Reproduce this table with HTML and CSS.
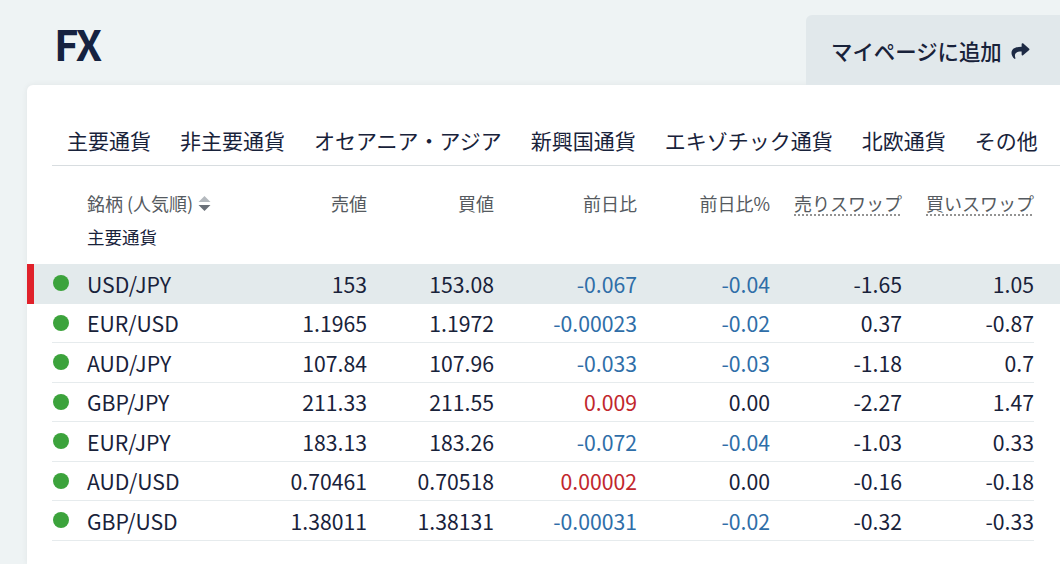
FILE: index.html
```html
<!DOCTYPE html>
<html lang="ja">
<head>
<meta charset="utf-8">
<title>FX</title>
<link rel="stylesheet" href="styles.css">
</head>
<body>
<div class="page">
  <header class="top">
    <h1 class="title">FX</h1>
    <button class="add-btn">マイページに追加
      <svg class="share" viewBox="0 0 512 512" width="21" height="18"><path fill="currentColor" d="M503.691 189.836L327.687 37.851C312.281 24.546 288 35.347 288 56.015v80.053C127.371 137.907 0 170.1 0 322.326c0 61.441 39.581 122.309 83.333 154.132 13.653 9.931 33.111-2.533 28.077-18.631C66.066 312.814 132.917 274.316 288 272.085V360c0 20.7 24.3 31.453 39.687 18.164l176.004-152c11.071-9.562 11.086-26.753 0-36.328z"/></svg>
    </button>
  </header>
  <main class="card">
    <nav class="tabs">
      <span class="tab">主要通貨</span>
      <span class="tab">非主要通貨</span>
      <span class="tab">オセアニア・アジア</span>
      <span class="tab">新興国通貨</span>
      <span class="tab">エキゾチック通貨</span>
      <span class="tab">北欧通貨</span>
      <span class="tab">その他</span>
    </nav>
    <div class="table">
      <div class="row head">
        <div class="inner">
          <span class="c-dot"></span>
          <span class="c-name">
            <span class="sort">銘柄 (人気順)
              <svg class="sort-ico" viewBox="0 0 12 18" width="13" height="18"><path d="M6 2 L12 8 H0 Z" fill="#b4b9be"/><path d="M6 17 L12 11 H0 Z" fill="#6a7078"/></svg>
            </span>
            <span class="group">主要通貨</span>
          </span>
          <span class="num">売値</span>
          <span class="num">買値</span>
          <span class="num">前日比</span>
          <span class="num">前日比%</span>
          <span class="num"><abbr class="dotted">売りスワップ</abbr></span>
          <span class="num"><abbr class="dotted">買いスワップ</abbr></span>
        </div>
      </div>

      <div class="row active">
        <div class="inner">
          <span class="c-dot"><i class="dot"></i></span>
          <span class="c-name">USD/JPY</span>
          <span class="num">153</span>
          <span class="num">153.08</span>
          <span class="num down">-0.067</span>
          <span class="num down">-0.04</span>
          <span class="num">-1.65</span>
          <span class="num">1.05</span>
        </div>
      </div>
      <div class="row">
        <div class="inner">
          <span class="c-dot"><i class="dot"></i></span>
          <span class="c-name">EUR/USD</span>
          <span class="num">1.1965</span>
          <span class="num">1.1972</span>
          <span class="num down">-0.00023</span>
          <span class="num down">-0.02</span>
          <span class="num">0.37</span>
          <span class="num">-0.87</span>
        </div>
      </div>
      <div class="row">
        <div class="inner">
          <span class="c-dot"><i class="dot"></i></span>
          <span class="c-name">AUD/JPY</span>
          <span class="num">107.84</span>
          <span class="num">107.96</span>
          <span class="num down">-0.033</span>
          <span class="num down">-0.03</span>
          <span class="num">-1.18</span>
          <span class="num">0.7</span>
        </div>
      </div>
      <div class="row">
        <div class="inner">
          <span class="c-dot"><i class="dot"></i></span>
          <span class="c-name">GBP/JPY</span>
          <span class="num">211.33</span>
          <span class="num">211.55</span>
          <span class="num up">0.009</span>
          <span class="num">0.00</span>
          <span class="num">-2.27</span>
          <span class="num">1.47</span>
        </div>
      </div>
      <div class="row">
        <div class="inner">
          <span class="c-dot"><i class="dot"></i></span>
          <span class="c-name">EUR/JPY</span>
          <span class="num">183.13</span>
          <span class="num">183.26</span>
          <span class="num down">-0.072</span>
          <span class="num down">-0.04</span>
          <span class="num">-1.03</span>
          <span class="num">0.33</span>
        </div>
      </div>
      <div class="row">
        <div class="inner">
          <span class="c-dot"><i class="dot"></i></span>
          <span class="c-name">AUD/USD</span>
          <span class="num">0.70461</span>
          <span class="num">0.70518</span>
          <span class="num up">0.00002</span>
          <span class="num">0.00</span>
          <span class="num">-0.16</span>
          <span class="num">-0.18</span>
        </div>
      </div>
      <div class="row">
        <div class="inner">
          <span class="c-dot"><i class="dot"></i></span>
          <span class="c-name">GBP/USD</span>
          <span class="num">1.38011</span>
          <span class="num">1.38131</span>
          <span class="num down">-0.00031</span>
          <span class="num down">-0.02</span>
          <span class="num">-0.32</span>
          <span class="num">-0.33</span>
        </div>
      </div>
    </div>
  </main>
</div>
</body>
</html>
```

FILE: styles.css
```css
* { box-sizing: border-box; }
html, body { margin: 0; padding: 0; }
body {
  background: #eef3f4;
  font-family: "Noto Sans CJK JP", "Noto Sans", sans-serif;
  color: #18223a;
  width: 1060px;
  height: 564px;
  overflow: hidden;
}
.page { padding-left: 27px; }
.top {
  display: flex;
  justify-content: space-between;
  align-items: flex-start;
  height: 85px;
}
.title {
  margin: 15px 0 0 27px;
  font-size: 42px;
  font-weight: 700;
  line-height: 56px;
  color: #152240;
  letter-spacing: -1.5px;
}
.add-btn {
  margin-top: 15px;
  width: 254px;
  height: 70px;
  border: none;
  border-radius: 6px 0 0 0;
  background: #e1e8eb;
  font-family: inherit;
  font-size: 21.4px;
  color: #18223a;
  display: flex;
  align-items: center;
  padding: 0 0 0 25px;
  gap: 8px;
  font-weight: 500;
}
.share { color: #1d2a44; margin-top: 1px; }
.card {
  background: #fff;
  border-radius: 6px 0 0 0;
  box-shadow: 0 0 6px rgba(0, 0, 0, 0.06);
  height: 479px;
  padding-top: 30px;
}
.tabs {
  display: flex;
  gap: 29px;
  margin-left: 25px;
  padding-left: 15px;
  height: 51px;
  border-bottom: 1px solid #d8dde0;
  font-size: 21px;
  line-height: 50px;
  white-space: nowrap;
}
.tab { color: #18223a; }
.row {
  padding: 0 26px 0 25px;
}
.inner {
  display: grid;
  grid-template-columns: 35px 180px 100px 127px 143px 133px 132px 132px;
  align-items: center;
  height: 39.5px;
  border-bottom: 1px solid #e6ebed;
  font-size: 21.2px;
}
.row.active {
  background: #e3eaec;
  border-left: 7px solid #e0212a;
  padding-left: 18px;
}
.row.active .inner { border-bottom-color: transparent; }
.head .inner {
  height: 98px;
  align-items: start;
  border-bottom: none;
  font-size: 18px;
  color: #555a60;
  padding-top: 25px;
}
.c-name { display: flex; flex-direction: column; }
.head .c-name { gap: 10px; }
.sort { display: flex; align-items: center; gap: 5px; line-height: 24px; }
.group { color: #18223a; line-height: 24px; font-size: 17.5px; }
.head .num { line-height: 24px; }
.sort-ico { margin-top: -1px; }
.num { text-align: right; }
.dotted {
  text-decoration: underline dotted #888;
  text-underline-offset: 4px;
}
.c-dot { display: flex; align-items: center; }
.dot {
  display: block;
  width: 16px;
  height: 16px;
  border-radius: 50%;
  background: #3ca33c;
  margin-left: 1px;
}
.down { color: #2f6ea8; }
.up { color: #c1272d; }
```
